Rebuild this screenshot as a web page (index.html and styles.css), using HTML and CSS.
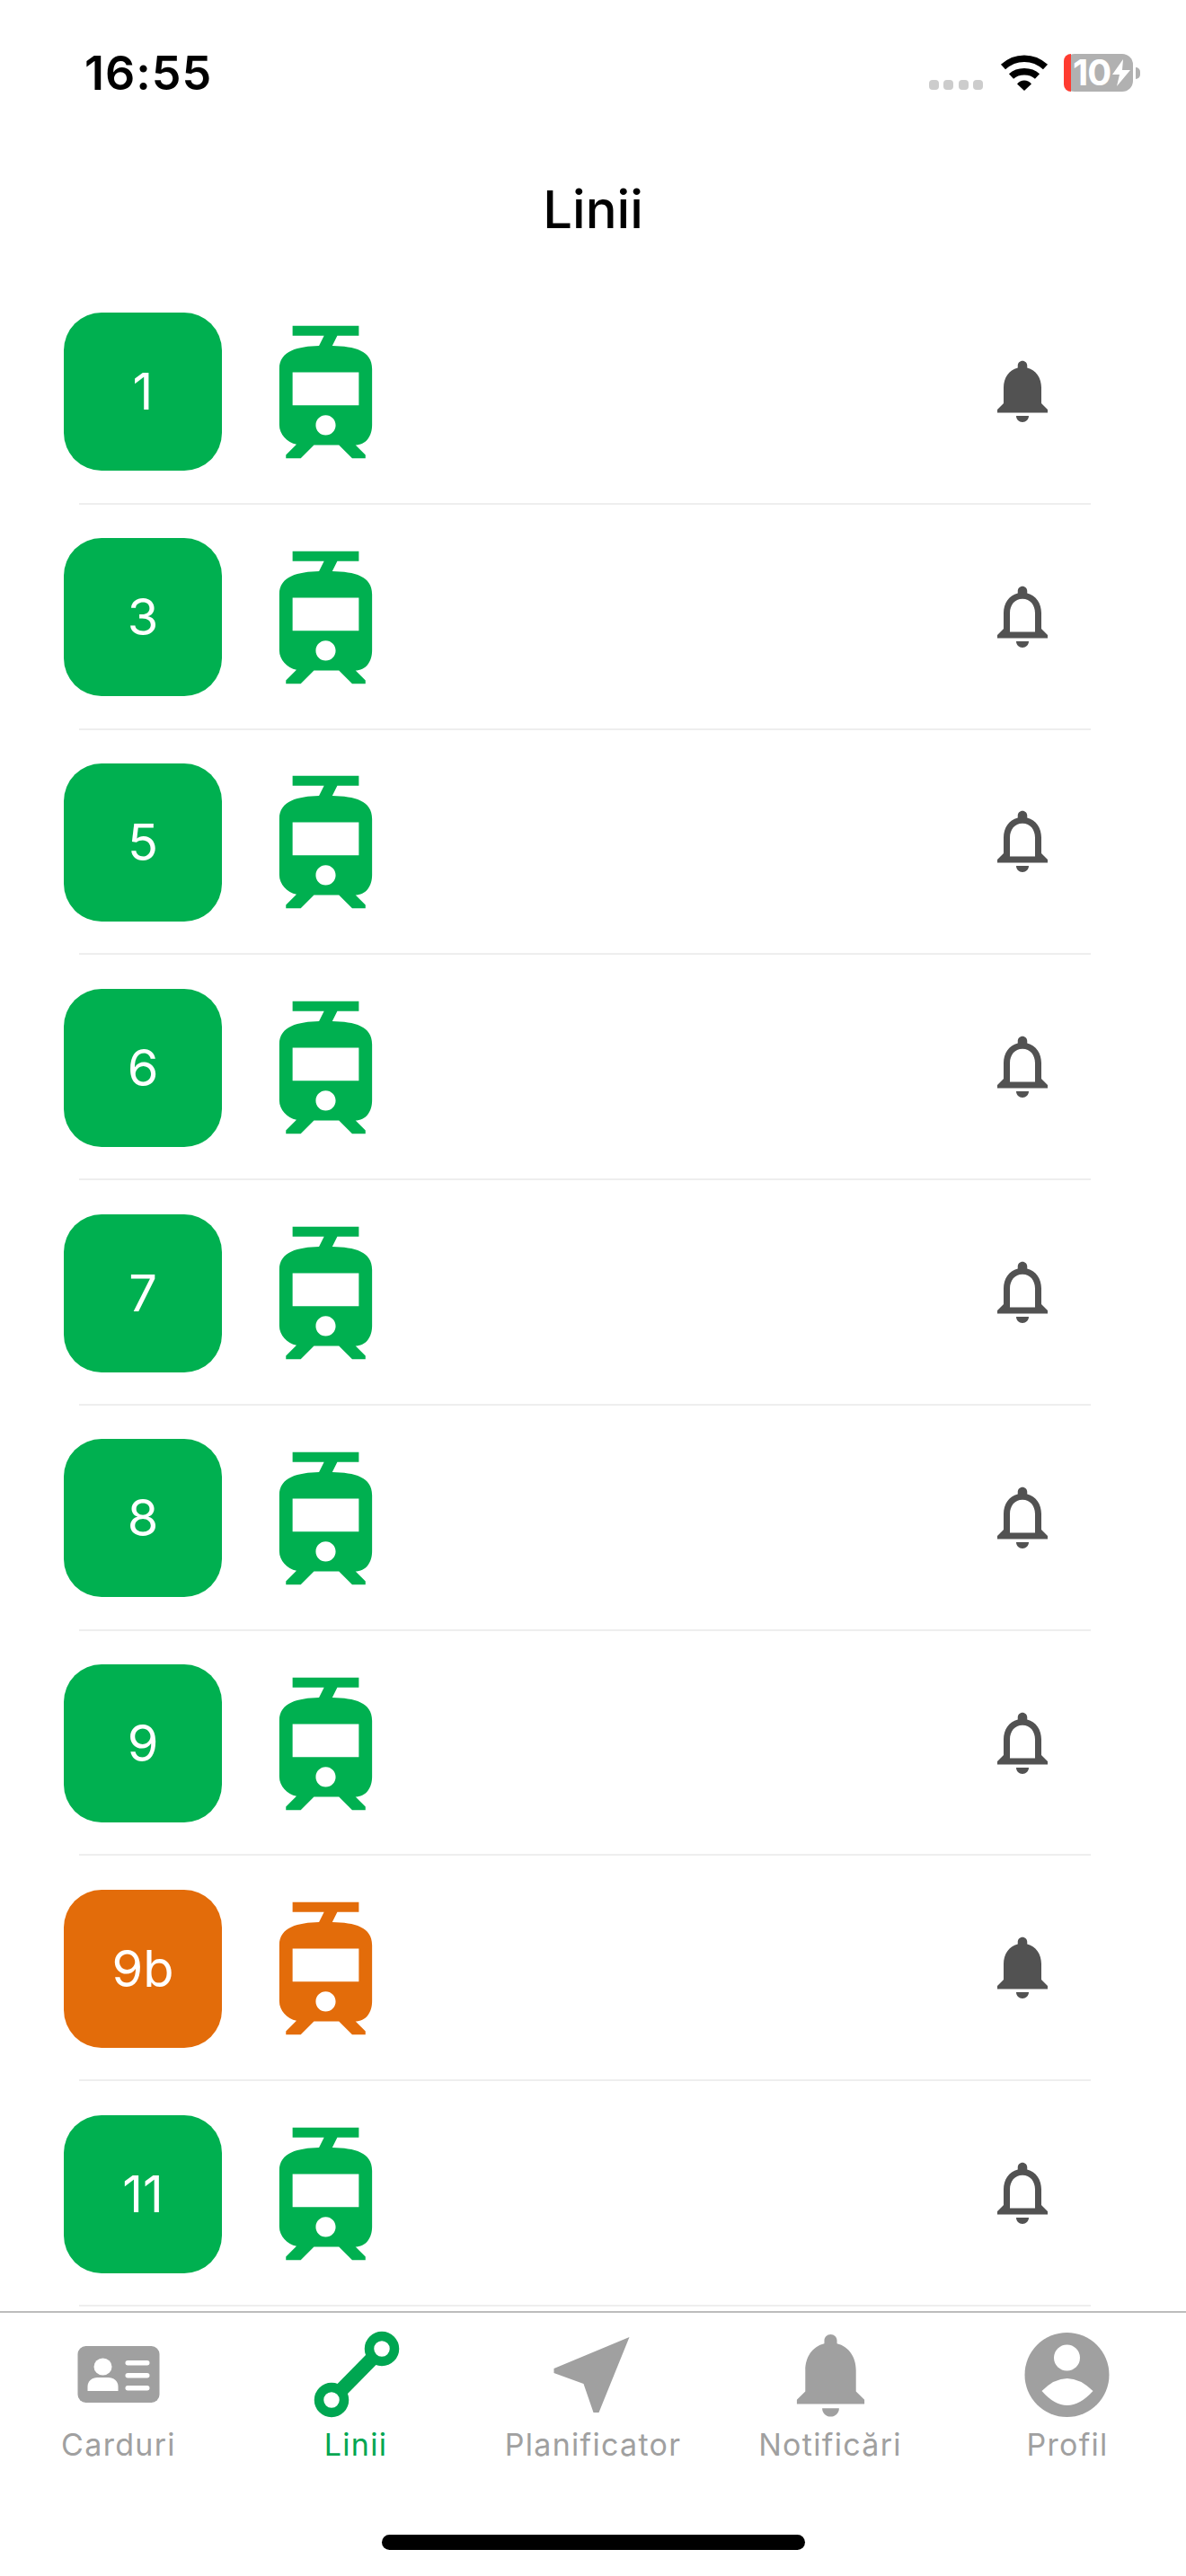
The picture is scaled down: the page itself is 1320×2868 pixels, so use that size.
FILE: index.html
```html
<!DOCTYPE html>
<html lang="ro">
<head>
<meta charset="utf-8">
<title>Linii</title>
<link rel="stylesheet" href="styles.css">
</head>
<body>
<svg class="defs" width="0" height="0" aria-hidden="true">
  <symbol id="tram" viewBox="0 0 24 24">
    <path d="M19 16.94V8.5c0-2.79-2.61-3.4-6.01-3.49l.76-1.51H17V2H7v1.5h4.75l-.76 1.52C7.86 5.11 5 5.73 5 8.5v8.44c0 1.45 1.19 2.66 2.59 2.97L6 21.5v.5h2.23l2-2H14l2 2h2v-.5L16.5 20h-.08c1.69 0 2.58-1.37 2.58-3.06zm-7 1.56c-.83 0-1.5-.67-1.5-1.5s.67-1.5 1.5-1.5 1.5.67 1.5 1.5-.67 1.5-1.5 1.5zm5-4.5H7V9h10v5z"/>
  </symbol>
  <symbol id="bell-on" viewBox="0 0 24 24">
    <path d="M12 22c1.1 0 2-.9 2-2h-4c0 1.1.89 2 2 2zm6-6v-5c0-3.07-1.64-5.64-4.5-6.32V4c0-.83-.67-1.5-1.5-1.5s-1.5.67-1.5 1.5v.68C7.63 5.36 6 7.92 6 11v5l-2 2v1h16v-1l-2-2z"/>
  </symbol>
  <symbol id="bell-off" viewBox="0 0 24 24">
    <path d="M12 22c1.1 0 2-.9 2-2h-4c0 1.1.9 2 2 2zm6-6v-5c0-3.07-1.63-5.64-4.5-6.32V4c0-.83-.67-1.5-1.5-1.5s-1.5.67-1.5 1.5v.68C7.64 5.36 6 7.92 6 11v5l-2 2v1h16v-1l-2-2zm-2 1H8v-6c0-2.48 1.51-4.5 4-4.5s4 2.02 4 4.5v6z"/>
  </symbol>
</svg>

<div class="screen">
  <header class="status">
    <span class="clock">16:55</span>
    <div class="status-icons">
      <div class="signal"><i></i><i></i><i></i><i></i></div>
      <svg class="wifi" width="54" height="40" viewBox="0 0 54 40">
        <path class="wifi-arc" d="M3.5 13.5C17 1 37 1 50.5 13.5"/>
        <path class="wifi-arc" d="M12.5 24C20 17 34 17 41.5 24"/>
        <path d="M19 32.5C23 27 31 27 35 32.5L27 40z"/>
      </svg>
      <div class="battery">
        <div class="battery-body">
          <span class="battery-low"></span>
          <span class="battery-level">10</span>
          <svg class="bolt" width="22" height="30" viewBox="0 0 22 30"><path d="M13 0L1 17h8l-3 13L21 12h-9z"/></svg>
        </div>
        <span class="battery-cap"></span>
      </div>
    </div>
  </header>

  <h1 class="title">Linii</h1>

  <main class="lines">
    <div class="line">
      <span class="badge">1</span>
      <svg class="tram"><use href="#tram"/></svg>
      <svg class="bell"><use href="#bell-on"/></svg>
    </div>
    <div class="line">
      <span class="badge">3</span>
      <svg class="tram"><use href="#tram"/></svg>
      <svg class="bell"><use href="#bell-off"/></svg>
    </div>
    <div class="line">
      <span class="badge">5</span>
      <svg class="tram"><use href="#tram"/></svg>
      <svg class="bell"><use href="#bell-off"/></svg>
    </div>
    <div class="line">
      <span class="badge">6</span>
      <svg class="tram"><use href="#tram"/></svg>
      <svg class="bell"><use href="#bell-off"/></svg>
    </div>
    <div class="line">
      <span class="badge">7</span>
      <svg class="tram"><use href="#tram"/></svg>
      <svg class="bell"><use href="#bell-off"/></svg>
    </div>
    <div class="line">
      <span class="badge">8</span>
      <svg class="tram"><use href="#tram"/></svg>
      <svg class="bell"><use href="#bell-off"/></svg>
    </div>
    <div class="line">
      <span class="badge">9</span>
      <svg class="tram"><use href="#tram"/></svg>
      <svg class="bell"><use href="#bell-off"/></svg>
    </div>
    <div class="line line-orange">
      <span class="badge">9b</span>
      <svg class="tram"><use href="#tram"/></svg>
      <svg class="bell"><use href="#bell-on"/></svg>
    </div>
    <div class="line">
      <span class="badge">11</span>
      <svg class="tram"><use href="#tram"/></svg>
      <svg class="bell"><use href="#bell-off"/></svg>
    </div>
  </main>

  <nav class="tabs">
    <a class="tab">
      <svg class="tab-icon" viewBox="0 0 113 100">
        <rect x="10.5" y="18" width="91" height="63" rx="9"/>
        <g class="cutout">
          <ellipse cx="38.5" cy="41" rx="10" ry="9.5"/>
          <path d="M21.5 68v-5c0-6 5-10 11-10h12c6 0 11 4 11 10v5z"/>
          <rect x="63.5" y="34" width="27" height="5.5" rx="2.7"/>
          <rect x="63.5" y="48" width="27" height="5.5" rx="2.7"/>
          <rect x="63.5" y="62" width="27" height="5.5" rx="2.7"/>
        </g>
      </svg>
      <span class="tab-label">Carduri</span>
    </a>
    <a class="tab tab-active">
      <svg class="tab-icon" viewBox="0 0 113 100">
        <path class="route-link" d="M29 78L85 21"/>
        <circle class="route-stop" cx="85" cy="21" r="14"/>
        <circle class="route-stop" cx="29" cy="78" r="14"/>
      </svg>
      <span class="tab-label">Linii</span>
    </a>
    <a class="tab">
      <svg class="tab-icon" viewBox="0 0 113 100">
        <path d="M12.5 43v5L45.5 60l11 32h6L96.5 8z"/>
      </svg>
      <span class="tab-label">Planificator</span>
    </a>
    <a class="tab">
      <svg class="tab-icon" viewBox="0 1.44 24 21.28"><use href="#bell-on" width="24" height="24"/></svg>
      <span class="tab-label">Notificări</span>
    </a>
    <a class="tab">
      <svg class="tab-icon" viewBox="0 0 113 100">
        <circle cx="55.5" cy="50" r="47"/>
        <g class="cutout">
          <circle cx="55.5" cy="31" r="14.5"/>
          <path d="M27.5 68Q55.5 40 84.5 68Q55.5 100 27.5 68z"/>
        </g>
      </svg>
      <span class="tab-label">Profil</span>
    </a>
  </nav>

  <div class="home-bar"></div>
</div>
</body>
</html>
```

FILE: styles.css
```css
* {
  box-sizing: border-box;
}

html,
body {
  margin: 0;
  background: #fff;
}

.defs {
  position: absolute;
}

.screen {
  width: 1320px;
  height: 2868px;
  display: flex;
  flex-direction: column;
  overflow: hidden;
  background: #fff;
  font-family: Inter, "Liberation Sans", sans-serif;
}

/* Status bar */
.status {
  height: 130px;
  flex: none;
  display: flex;
  justify-content: space-between;
  padding: 52px 51px 0 94px;
}

.clock {
  font-size: 52px;
  line-height: 60px;
  font-weight: 600;
  letter-spacing: 1px;
  color: #000;
}

.status-icons {
  display: flex;
  align-items: flex-start;
  padding-top: 8px;
}

.signal {
  display: flex;
  gap: 5.5px;
  margin-top: 29px;
  margin-right: 19px;
}

.signal i {
  width: 11px;
  height: 11px;
  border-radius: 4px;
  background: #cccccc;
}

.wifi {
  margin-top: 1px;
  margin-right: 17px;
  fill: #000;
}

.wifi-arc {
  fill: none;
  stroke: #000;
  stroke-width: 7.5;
}

.battery {
  display: flex;
  align-items: center;
}

.battery-body {
  position: relative;
  width: 77px;
  height: 42px;
  display: flex;
  align-items: center;
  padding-left: 10px;
  border-radius: 12px;
  background: #b1b1b1;
}

.battery-low {
  position: absolute;
  left: 0;
  top: 0;
  bottom: 0;
  width: 8px;
  border-radius: 12px 0 0 12px;
  background: #ff3b30;
}

.battery-level {
  font-size: 40px;
  line-height: 42px;
  font-weight: 700;
  letter-spacing: -1px;
  color: #fff;
}

.bolt {
  margin-left: 1px;
  fill: #fff;
}

.battery-cap {
  width: 5px;
  height: 13px;
  margin-left: 3px;
  border-radius: 0 6px 6px 0;
  background: #b1b1b1;
}

/* Page title */
.title {
  flex: none;
  height: 181px;
  margin: 0;
  padding-top: 68px;
  text-align: center;
  font-size: 58px;
  line-height: 70px;
  font-weight: 500;
  color: #000;
}

/* Line list */
.lines {
  flex: 1;
  min-height: 0;
  padding-bottom: 5px;
  display: flex;
  flex-direction: column;
}

.line {
  position: relative;
  flex: 1;
  display: flex;
  align-items: center;
  padding: 0 140px 0 71px;
  --line-color: #00b050;
}

.line::after {
  content: "";
  position: absolute;
  left: 88px;
  right: 106px;
  bottom: 0;
  height: 2px;
  background: #eeeeee;
}

.line-orange {
  --line-color: #e36c0a;
}

.badge {
  width: 176px;
  height: 176px;
  flex: none;
  display: flex;
  align-items: center;
  justify-content: center;
  border-radius: 42px;
  background: var(--line-color);
  color: #fff;
  font-size: 56px;
  font-weight: 400;
}

.tram {
  width: 177px;
  height: 177px;
  flex: none;
  margin-left: 27px;
  fill: var(--line-color);
}

.bell {
  width: 84px;
  height: 84px;
  flex: none;
  margin-left: auto;
  margin-bottom: 3px;
  fill: #525252;
}

/* Bottom tabs */
.tabs {
  flex: none;
  height: 151px;
  display: grid;
  grid-template-columns: repeat(5, 264px);
  border-top: 2px solid #bdbdbd;
  color: #a0a0a0;
  padding-top: 19px;
}

.tab {
  display: flex;
  flex-direction: column;
  align-items: center;
}

.tab-icon {
  width: 113px;
  height: 100px;
  flex: none;
  fill: #a0a0a0;
}

.cutout {
  fill: #fff;
}

.tab-label {
  margin-top: 6px;
  font-size: 34px;
  line-height: 44px;
  letter-spacing: 1.3px;
}

.tab-active {
  color: #00a651;
}

.route-link {
  fill: none;
  stroke: #00a651;
  stroke-width: 16;
}

.route-stop {
  fill: #fff;
  stroke: #00a651;
  stroke-width: 10.5;
}

/* Home indicator */
.home-bar {
  flex: none;
  width: 471px;
  height: 17px;
  margin: 98px auto 29px;
  border-radius: 9px;
  background: #000;
}
```
